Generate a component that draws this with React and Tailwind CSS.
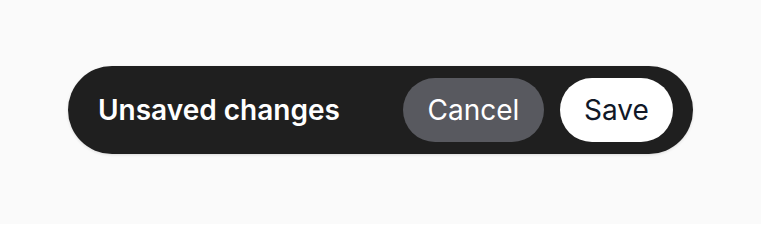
import React from 'react'

function App() {
    return (
        <div className="h-[224px] w-full bg-[#fafafa] flex justify-center pt-[66px]" style={{ fontFamily: 'Inter, "Noto Sans", sans-serif' }}>
            <div className="w-[625px] h-[88px] rounded-full bg-[#1f1f1f] shadow-[0_1px_3px_rgba(0,0,0,0.12)] flex items-center justify-between pl-[30px] pr-5">
                <span className="text-[28px] font-semibold text-white leading-none">Unsaved changes</span>
                <div className="flex items-center gap-4">
                    <button className="h-16 w-[141px] rounded-full bg-[#58595f] text-[28px] text-white leading-none">Cancel</button>
                    <button className="h-16 w-[113px] rounded-full bg-white text-[28px] text-[#111827] leading-none">Save</button>
                </div>
            </div>
        </div>
    )
}

export default App
